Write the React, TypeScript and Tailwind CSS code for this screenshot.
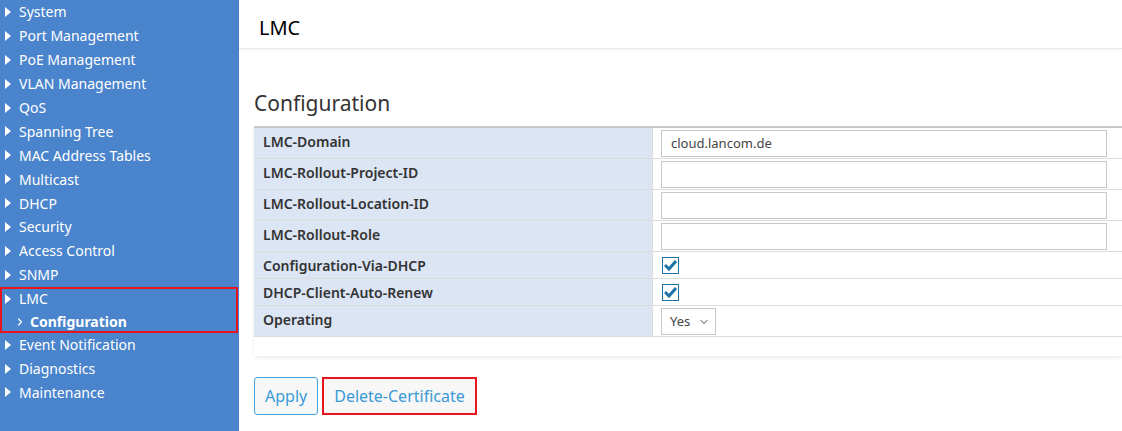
import { ChevronDown, ChevronRight } from 'lucide-react';

const menu = [
  'System',
  'Port Management',
  'PoE Management',
  'VLAN Management',
  'QoS',
  'Spanning Tree',
  'MAC Address Tables',
  'Multicast',
  'DHCP',
  'Security',
  'Access Control',
  'SNMP',
];

const menuAfter = ['Event Notification', 'Diagnostics', 'Maintenance'];

function Arrow() {
  return (
    <svg className="w-[6px] h-[10px] shrink-0" viewBox="0 0 6 10">
      <path d="M0 0 L6 5 L0 10 Z" fill="white" />
    </svg>
  );
}

function MenuItem({ label }: { label: string }) {
  return (
    <div className="flex items-center h-[23.9px] pl-[5px] gap-[8px] text-white">
      <Arrow />
      <span>{label}</span>
    </div>
  );
}

function Check() {
  return (
    <div className="w-[17px] h-[17px] border-[1.5px] border-[#1f72a6] bg-white flex items-center justify-center">
      <svg className="w-[13px] h-[11px]" viewBox="0 0 13 11">
        <path d="M1 5 L5 9 L12 1" stroke="#1f72a6" strokeWidth={3} fill="none" />
      </svg>
    </div>
  );
}

const rows = [
  { label: 'LMC-Domain', kind: 'input', value: 'cloud.lancom.de' },
  { label: 'LMC-Rollout-Project-ID', kind: 'input', value: '' },
  { label: 'LMC-Rollout-Location-ID', kind: 'input', value: '' },
  { label: 'LMC-Rollout-Role', kind: 'input', value: '' },
  { label: 'Configuration-Via-DHCP', kind: 'check', value: '' },
  { label: 'DHCP-Client-Auto-Renew', kind: 'check', value: '' },
  { label: 'Operating', kind: 'select', value: 'Yes' },
];

export default function App() {
  return (
    <div className="flex w-[1122px] h-[431px] overflow-hidden bg-white text-[14px] font-['Noto_Sans','Open_Sans',sans-serif] text-[#333]">
      {/* Sidebar */}
      <div className="w-[239px] shrink-0 bg-[#4a84cc]">
        {menu.map((m) => (
          <MenuItem key={m} label={m} />
        ))}
        {/* selected group, highlighted */}
        <div className="relative">
          <div className="flex items-center h-[24px] pl-[5px] gap-[8px] text-white">
            <Arrow />
            <span>LMC</span>
          </div>
          <div className="flex items-center h-[22px] pl-[14px] gap-[4px] text-white font-bold">
            <ChevronRight className="w-[12px] h-[12px]" strokeWidth={2.5} />
            <span>Configuration</span>
          </div>
          <div className="absolute inset-0 right-[1px] border-2 border-[#e8141e]" />
        </div>
        {menuAfter.map((m) => (
          <MenuItem key={m} label={m} />
        ))}
      </div>

      {/* Main */}
      <div className="flex-1 flex flex-col min-w-0">
        <div className="h-[49px] flex items-center pl-[20px] pt-[7px] text-[20px] text-black border-b border-[#e8e8e8] shadow-[0_1px_3px_rgba(0,0,0,0.06)]">
          LMC
        </div>

        <div className="pl-[15px] pt-[39px]">
          <h2 className="text-[21px] text-[#333] leading-[30px] mb-[8px]">Configuration</h2>

          <div className="shadow-[0_2px_4px_rgba(0,0,0,0.08)] pb-[19px] border-t-2 border-[#c8c8c8]">
            {rows.map((r) => (
              <div key={r.label} className="flex border-b border-[#dcdcdc]">
                <div className="w-[399px] shrink-0 bg-[#dbe5f4] border-r border-[#dcdcdc] pl-[9px] pt-[3px] font-semibold text-[14px] text-[#333]">
                  {r.label}
                </div>
                <div className="flex-1 pl-[8px]">
                  {r.kind === 'input' && (
                    <div className="pt-[2px] pb-[1px]">
                      <div className="w-[446px] h-[27px] border border-[#c8c8c8] flex items-center pl-[9px] text-[13px] text-[#444]">
                        {r.value}
                      </div>
                    </div>
                  )}
                  {r.kind === 'check' && (
                    <div className="h-[26px] pl-[1px] flex items-center">
                      <Check />
                    </div>
                  )}
                  {r.kind === 'select' && (
                    <div className="pt-[2px] pb-[1px]">
                      <div className="w-[55px] h-[27px] border border-[#c8c8c8] flex items-center pl-[8px] gap-[8px] text-[13px] text-[#444]">
                        <span>Yes</span>
                        <ChevronDown className="w-[12px] h-[12px]" strokeWidth={2} />
                      </div>
                    </div>
                  )}
                </div>
              </div>
            ))}
          </div>

          <div className="flex gap-[4px] mt-[21px]">
            <button className="h-[38px] px-[10px] border border-[#3ea3dc] rounded-[3px] bg-[#f7f7f7] text-[16px] text-[#3a9ad6]">
              Apply
            </button>
            <button className="h-[38px] px-[10px] border-2 border-[#e8141e] bg-[#f7f7f7] text-[16px] text-[#3a9ad6]">
              Delete-Certificate
            </button>
          </div>
        </div>
      </div>
    </div>
  );
}
